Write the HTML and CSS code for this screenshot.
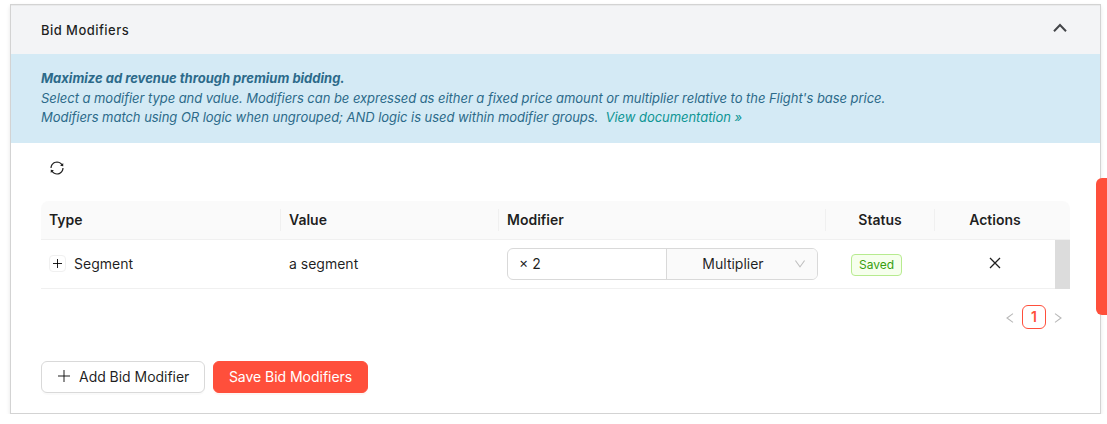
FILE: index.html
```html
<!DOCTYPE html>
<html lang="en">
<head>
  <meta charset="UTF-8" />
  <meta name="viewport" content="width=device-width, initial-scale=1.0"/>
  <title>Bid Modifiers</title>
  <link rel="stylesheet" href="styles.css">
</head>
<body>
  <section class="panel">
    <header class="panel-header">
      <h2>Bid Modifiers</h2>
      <svg class="chevron" width="16" height="16" viewBox="0 0 16 16"><path d="M2 11.2 8 5l6 6.2"/></svg>
    </header>

    <div class="notice">
      <strong>Maximize ad revenue through premium bidding.</strong>
      <p>Select a modifier type and value. Modifiers can be expressed as either a fixed price amount or multiplier relative to the Flight's base price.</p>
      <p>Modifiers match using OR logic when ungrouped; AND logic is used within modifier groups.&nbsp; <a href="#">View documentation »</a></p>
    </div>

    <div class="panel-body">
      <button class="refresh-btn" aria-label="Refresh">
        <svg width="14" height="14" viewBox="64 64 896 896" fill="currentColor"><path d="M168 504.2c1-43.7 10-86.1 26.9-126 17.3-41 42.1-77.7 73.7-109.4S337 212.3 378 195c42.4-17.9 87.4-27 133.9-27s91.5 9.1 133.8 27A341.5 341.5 0 01755 268.8c9.9 9.9 19.2 20.4 27.8 31.4l-60.2 47a8 8 0 003 14.1l175.7 43c5 1.2 9.9-2.6 9.9-7.7l.8-180.9c0-6.7-7.7-10.5-12.9-6.3l-56.4 44.1C765.8 155.1 646.2 92 511.8 92 282.7 92 96.3 275.6 92 503.8a8 8 0 008 8.2h60c4.4 0 7.9-3.5 8-7.8zm756 7.8h-60c-4.4 0-7.9 3.5-8 7.8-1 43.7-10 86.1-26.9 126-17.3 41-42.1 77.8-73.7 109.4A342.45 342.45 0 01512.1 856a342.24 342.24 0 01-243.2-100.8c-9.9-9.9-19.2-20.4-27.8-31.4l60.2-47a8 8 0 00-3-14.1l-175.7-43c-5-1.2-9.9 2.6-9.9 7.7l-.7 181c0 6.7 7.7 10.5 12.9 6.3l56.4-44.1C258.2 868.9 377.8 932 512.2 932c229.2 0 415.5-183.7 419.8-411.8a8 8 0 00-8-8.2z"/></svg>
      </button>

      <table class="modifiers">
        <colgroup>
          <col class="col-type">
          <col class="col-value">
          <col class="col-modifier">
          <col class="col-status">
          <col class="col-actions">
          <col class="col-scroll">
        </colgroup>
        <thead>
          <tr>
            <th><span>Type</span></th>
            <th><span>Value</span></th>
            <th><span>Modifier</span></th>
            <th class="center"><span>Status</span></th>
            <th class="center last"><span>Actions</span></th>
            <th class="last"></th>
          </tr>
        </thead>
        <tbody>
          <tr>
            <td>
              <div class="type-cell">
                <button class="expand-btn" aria-label="Expand row">
                  <svg width="9" height="9" viewBox="0 0 9 9"><path d="M4.5 0v9M0 4.5h9"/></svg>
                </button>
                <span>Segment</span>
              </div>
            </td>
            <td>a segment</td>
            <td>
              <div class="input-group">
                <div class="amount">× 2</div>
                <div class="unit">
                  <span>Multiplier</span>
                  <svg width="12" height="12" viewBox="64 64 896 896" fill="currentColor"><path d="M884 256h-75c-5.1 0-9.9 2.5-12.9 6.6L512 654.2 227.9 262.6c-3-4.1-7.8-6.6-12.9-6.6h-75c-6.5 0-10.3 7.4-6.5 12.7l352.6 486.1c12.8 17.6 39 17.6 51.7 0l352.6-486.1c3.9-5.3.1-12.7-6.4-12.7z"/></svg>
                </div>
              </div>
            </td>
            <td class="center"><span class="tag">Saved</span></td>
            <td class="center">
              <button class="remove-btn" aria-label="Remove">
                <svg width="12" height="12" viewBox="0 0 12 12"><path d="M1 1l10 10M11 1 1 11"/></svg>
              </button>
            </td>
            <td class="scroll"></td>
          </tr>
        </tbody>
      </table>

      <nav class="pagination">
        <svg width="8" height="10" viewBox="0 0 8 10"><path d="M7 .6 1 5l6 4.4"/></svg>
        <span class="page">1</span>
        <svg width="8" height="10" viewBox="0 0 8 10"><path d="M1 .6 7 5 1 9.4"/></svg>
      </nav>

      <div class="buttons">
        <button class="btn btn-add">
          <svg width="12" height="12" viewBox="0 0 12 12"><path d="M6 0v12M0 6h12"/></svg>
          Add Bid Modifier
        </button>
        <button class="btn btn-primary">Save Bid Modifiers</button>
      </div>
    </div>
  </section>

  <div class="side-tab"></div>
</body>
</html>
```
FILE: styles.css
```css
* {
  box-sizing: border-box;
}

body {
  margin: 0;
  padding: 4px 6px 0 10px;
  font-family: Inter, sans-serif;
  font-size: 14px;
  line-height: 22px;
  color: rgba(0, 0, 0, 0.88);
  background-color: #fff;
  overflow: hidden;
}

button {
  font-family: inherit;
  font-size: inherit;
  color: inherit;
  padding: 0;
  border: none;
  background: none;
  cursor: pointer;
}

svg {
  display: block;
  flex: none;
}

.panel {
  height: 410px;
  border: 1px solid #d3d3d3;
  box-shadow: 0 2px 4px rgba(0, 0, 0, 0.1);
}

.panel-header {
  display: flex;
  align-items: center;
  justify-content: space-between;
  height: 49px;
  padding: 1px 32px 0 30px;
  background-color: #f3f4f6;
  box-shadow: inset 0 1px 0 #e9eaeb;
}

.panel-header h2 {
  margin: 0;
  font-size: 13px;
  font-weight: 500;
  letter-spacing: 0.45px;
}

.chevron {
  margin-bottom: 4px;
  fill: none;
  stroke: #434549;
  stroke-width: 2;
}

.notice {
  height: 89px;
  padding: 15px 30px;
  background-color: #d4eaf5;
  color: #2c6a8a;
  font-size: 13px;
  font-style: italic;
  line-height: 19.5px;
}

.notice strong {
  display: block;
  font-weight: 700;
}

.notice p {
  margin: 0;
  letter-spacing: -0.045px;
  white-space: nowrap;
}

.notice a {
  color: #0e9594;
  text-decoration: none;
}

.panel-body {
  padding: 9px 30px 0;
}

.refresh-btn {
  display: flex;
  align-items: center;
  justify-content: center;
  width: 32px;
  height: 32px;
}

.modifiers {
  width: 1029px;
  margin-top: 17px;
  table-layout: fixed;
  border-collapse: separate;
  border-spacing: 0;
}

.col-type { width: 240px; }
.col-value { width: 218px; }
.col-modifier { width: 327px; }
.col-status { width: 109px; }
.col-actions { width: 120px; }
.col-scroll { width: 15px; }

.modifiers th {
  height: 39px;
  padding: 0;
  background-color: #fafafa;
  border-bottom: 1px solid #f0f0f0;
  font-weight: 600;
  text-align: left;
}

.modifiers th span {
  display: block;
  padding: 0 8px;
  border-right: 1px solid #f0f0f0;
}

.modifiers th.last span {
  border-right: none;
}

.modifiers th:first-child {
  border-top-left-radius: 8px;
}

.modifiers th:last-child {
  border-top-right-radius: 8px;
}

.modifiers td {
  height: 49px;
  padding: 0 8px;
  border-bottom: 1px solid #f0f0f0;
}

.modifiers .center {
  text-align: center;
}

.modifiers .scroll {
  padding: 0;
  background-color: #dcdcdc;
  border-bottom-color: #dcdcdc;
}

.type-cell {
  display: flex;
  align-items: center;
  gap: 8px;
}

.expand-btn {
  display: flex;
  align-items: center;
  justify-content: center;
  width: 17px;
  height: 17px;
  margin-bottom: 1px;
  border: 1px solid #f0f0f0;
  border-radius: 4px;
}

.expand-btn svg,
.btn svg,
.remove-btn svg {
  fill: none;
  stroke: currentColor;
}

.input-group {
  display: flex;
  width: 311px;
  height: 32px;
  border: 1px solid #d9d9d9;
  border-radius: 6px;
  overflow: hidden;
  line-height: 30px;
}

.amount {
  width: 159px;
  padding-left: 11px;
  border-right: 1px solid #d9d9d9;
}

.unit {
  display: flex;
  flex: 1;
  align-items: center;
  padding: 0 11px;
  background-color: #fafafa;
}

.unit span {
  flex: 1;
  padding-right: 6px;
  text-align: center;
}

.unit svg {
  color: #bfbfbf;
}

.tag {
  display: inline-block;
  margin-right: 8px;
  padding: 0 7px;
  border: 1px solid #b7eb8f;
  border-radius: 4px;
  background-color: #f6ffed;
  color: #389e0d;
  font-size: 12px;
  line-height: 20px;
  vertical-align: middle;
}

.remove-btn {
  display: inline-block;
  margin-bottom: 4px;
  vertical-align: middle;
}

.remove-btn svg {
  stroke-width: 1.3;
}

.pagination {
  display: flex;
  align-items: center;
  justify-content: flex-end;
  gap: 8px;
  margin-top: 16px;
  padding-right: 8px;
}

.pagination svg {
  margin-top: 2px;
  fill: none;
  stroke: #b8b8b8;
  stroke-width: 1.1;
}

.page {
  width: 24px;
  height: 24px;
  border: 1px solid #ff4f3b;
  border-radius: 6px;
  color: #ff4f3b;
  font-weight: 600;
  line-height: 22px;
  text-align: center;
}

.buttons {
  display: flex;
  gap: 8px;
  margin-top: 32px;
}

.btn {
  display: flex;
  align-items: center;
  gap: 9px;
  height: 32px;
  padding: 0 15px 1px;
  border: 1px solid #d9d9d9;
  border-radius: 6px;
  background-color: #fff;
  box-shadow: 0 2px 0 rgba(0, 0, 0, 0.02);
}

.btn-add {
  width: 164px;
  padding-left: 16px;
  letter-spacing: -0.03px;
  white-space: nowrap;
}

.btn-add svg {
  margin-bottom: 1px;
}

.btn-primary {
  justify-content: center;
  width: 155px;
  border-color: #ff4f3b;
  background-color: #ff4f3b;
  box-shadow: 0 2px 0 rgba(255, 79, 59, 0.06);
  color: #fff;
  letter-spacing: -0.03px;
  white-space: nowrap;
}

/* pinned to the edge of the window */
.side-tab {
  position: fixed;
  top: 178px;
  right: 0;
  width: 11px;
  height: 137px;
  border-radius: 6px 0 0 6px;
  background-color: #ff4f3b;
}
```
